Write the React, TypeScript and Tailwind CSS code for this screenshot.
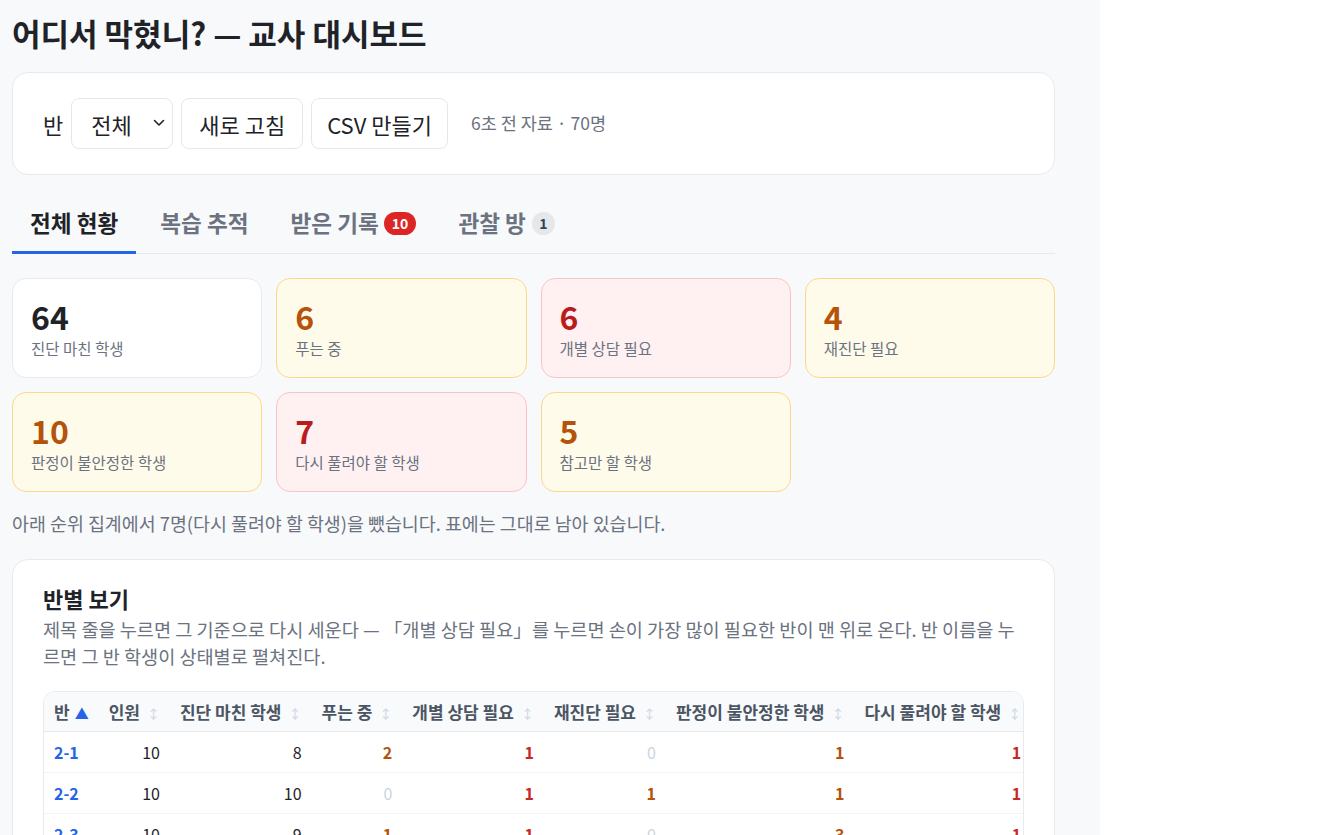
import React from "react";

const FONT = { fontFamily: '"Noto Sans CJK KR", "Noto Sans", sans-serif' };

type Tone = "plain" | "warn" | "danger";

const stats: { n: number; label: string; tone: Tone }[] = [
  { n: 64, label: "진단 마친 학생", tone: "plain" },
  { n: 6, label: "푸는 중", tone: "warn" },
  { n: 6, label: "개별 상담 필요", tone: "danger" },
  { n: 4, label: "재진단 필요", tone: "warn" },
  { n: 10, label: "판정이 불안정한 학생", tone: "warn" },
  { n: 7, label: "다시 풀려야 할 학생", tone: "danger" },
  { n: 5, label: "참고만 할 학생", tone: "warn" },
];

const cardTone: Record<Tone, string> = {
  plain: "bg-white border-[#e8eaee]",
  warn: "bg-[#fffbeb] border-[#fcd88a]",
  danger: "bg-[#fff1f2] border-[#fcc3c6]",
};
const numTone: Record<Tone, string> = {
  plain: "text-[#1f2328]",
  warn: "text-[#b45309]",
  danger: "text-[#b91c1c]",
};

type Row = {
  cls: string;
  total: number;
  done: number;
  solving: number;
  counsel: number;
  rediag: number;
  unstable: number;
  redo: number;
  ref: number;
};

const rows: Row[] = [
  { cls: "2-1", total: 10, done: 8, solving: 2, counsel: 1, rediag: 0, unstable: 1, redo: 1, ref: 1 },
  { cls: "2-2", total: 10, done: 10, solving: 0, counsel: 1, rediag: 1, unstable: 1, redo: 1, ref: 0 },
  { cls: "2-3", total: 10, done: 9, solving: 1, counsel: 1, rediag: 0, unstable: 3, redo: 1, ref: 1 },
  { cls: "2-4", total: 10, done: 9, solving: 1, counsel: 1, rediag: 1, unstable: 2, redo: 1, ref: 1 },
  { cls: "2-5", total: 10, done: 10, solving: 0, counsel: 0, rediag: 0, unstable: 1, redo: 1, ref: 0 },
  { cls: "2-6", total: 10, done: 9, solving: 1, counsel: 1, rediag: 1, unstable: 1, redo: 1, ref: 1 },
  { cls: "2-7", total: 10, done: 9, solving: 1, counsel: 1, rediag: 1, unstable: 1, redo: 1, ref: 1 },
];

function SortIcon() {
  return <span className="ml-[7px] text-[13px] font-normal text-[#cbd5e1]">↕</span>;
}

function Num({ v, kind }: { v: number; kind: "warn" | "danger" }) {
  if (v === 0) return <span className="text-[#cbd5e1]">0</span>;
  return (
    <span className={kind === "warn" ? "font-bold text-[#b45309]" : "font-bold text-[#c62828]"}>{v}</span>
  );
}

const heads: { label: string; key: keyof Row }[] = [
  { label: "인원", key: "total" },
  { label: "진단 마친 학생", key: "done" },
  { label: "푸는 중", key: "solving" },
  { label: "개별 상담 필요", key: "counsel" },
  { label: "재진단 필요", key: "rediag" },
  { label: "판정이 불안정한 학생", key: "unstable" },
  { label: "다시 풀려야 할 학생", key: "redo" },
  { label: "참고만 할 학생", key: "ref" },
];

const kindOf: Partial<Record<keyof Row, "warn" | "danger">> = {
  solving: "warn",
  counsel: "danger",
  rediag: "warn",
  unstable: "warn",
  redo: "danger",
  ref: "warn",
};

const tabBase = "-mb-px flex items-center border-b-[3px] px-[18px] pb-[14px] pt-[12px] text-[22.6px] leading-[28px]";

export default function App() {
  return (
    <div className="flex h-[835px] w-[1336px] bg-white" style={FONT}>
      <div className="h-[835px] w-[1100px] shrink-0 overflow-y-scroll bg-[#f8f9fb] [scrollbar-color:#8c8c8c_#fafafa] [&::-webkit-scrollbar]:w-[24px] [&::-webkit-scrollbar-track]:bg-[#fafafa] [&::-webkit-scrollbar-thumb]:rounded-full [&::-webkit-scrollbar-thumb]:border-[5px] [&::-webkit-scrollbar-thumb]:border-solid [&::-webkit-scrollbar-thumb]:border-transparent [&::-webkit-scrollbar-thumb]:bg-[#8c8c8c] [&::-webkit-scrollbar-thumb]:bg-clip-padding">
        <div className="ml-3 w-[1043px] pb-10 pt-[14px]">
          <h1 className="text-[31px] font-bold leading-[38px] text-[#1f2328]">어디서 막혔니? — 교사 대시보드</h1>

          <div className="mt-[20px] flex items-center gap-2 rounded-[16px] border border-[#e8eaee] bg-white px-[30px] py-[25px]">
            <span className="text-[22px] leading-[28px] text-[#1f2328]">반</span>
            <div className="relative">
              <select
                className="h-[51px] appearance-none rounded-[8px] border border-[#e5e7eb] bg-white pl-[19px] pr-[40px] text-[22px] leading-[28px] text-[#1f2328] outline-none"
                style={FONT}
                defaultValue="all"
              >
                <option value="all">전체</option>
              </select>
              <svg
                className="pointer-events-none absolute right-[7px] top-[18px]"
                width="14"
                height="14"
                viewBox="0 0 14 14"
                fill="none"
              >
                <path d="M2.5 4.5 7 9l4.5-4.5" stroke="#1f2328" strokeWidth="1.6" strokeLinecap="round" strokeLinejoin="round" />
              </svg>
            </div>
            <button className="h-[51px] rounded-[8px] border border-[#e5e7eb] bg-white px-[17px] text-[22px] leading-[28px] text-[#1f2328]">
              새로 고침
            </button>
            <button className="h-[51px] rounded-[8px] border border-[#e5e7eb] bg-white px-[15px] text-[22px] leading-[28px] text-[#1f2328]">
              CSV 만들기
            </button>
            <span className="ml-[15px] text-[17.5px] text-[#6b7280]">6초 전 자료 · 70명</span>
          </div>

          <div className="mt-[22px] flex gap-[6px] border-b border-[#e8eaee]">
            <div className={`${tabBase} border-[#2563eb] font-bold text-[#1f2328]`}>전체 현황</div>
            <div className={`${tabBase} border-transparent font-semibold text-[#6b7280]`}>복습 추적</div>
            <div className={`${tabBase} border-transparent font-semibold text-[#6b7280]`}>
              받은 기록
              <span className="ml-[5px] flex h-[23px] items-center rounded-full bg-[#dc2626] px-[8px] text-[14px] font-bold leading-none text-white">
                10
              </span>
            </div>
            <div className={`${tabBase} border-transparent font-semibold text-[#6b7280]`}>
              관찰 방
              <span className="ml-[6px] flex h-[23px] w-[23px] items-center justify-center rounded-full bg-[#e5e7eb] text-[14px] font-semibold leading-none text-[#374151]">
                1
              </span>
            </div>
          </div>

          <div className="mt-[24px] grid grid-cols-4 gap-[14px]">
            {stats.map((s) => (
              <div key={s.label} className={`rounded-[14px] border px-[18px] pb-[18px] pt-[16px] ${cardTone[s.tone]}`}>
                <div className={`text-[32px] font-bold leading-[42px] ${numTone[s.tone]}`}>{s.n}</div>
                <div className="text-[15.5px] leading-[22px] text-[#6b7280]">{s.label}</div>
              </div>
            ))}
          </div>

          <p className="mt-[18px] text-[18.4px] leading-[26px] text-[#6b7280]">
            아래 순위 집계에서 7명(다시 풀려야 할 학생)을 뺐습니다. 표에는 그대로 남아 있습니다.
          </p>

          <div className="mt-[23px] rounded-[16px] border border-[#e8eaee] bg-white px-[30px] pb-[30px] pt-[23px]">
            <h2 className="text-[22px] font-bold leading-[30px] text-[#1f2328]">반별 보기</h2>
            <p className="mt-[2px] text-[18.6px] leading-[27px] text-[#6b7280]">
              제목 줄을 누르면 그 기준으로 다시 세운다 — 「개별 상담 필요」를 누르면 손이 가장 많이 필요한 반이 맨 위로 온다. 반 이름을 누르면 그 반 학생이 상태별로 펼쳐진다.
            </p>

            <div className="mt-[22px] overflow-x-auto rounded-[12px] border border-[#e8eaee]">
              <table className="min-w-full border-collapse whitespace-nowrap text-[16px]">
                <thead>
                  <tr className="bg-[#f8fafc]">
                    <th className="h-[39px] border-b border-[#e8eaee] px-[10px] text-left text-[17px] font-semibold text-[#4b5563]">
                      반<span className="ml-[5px] text-[14px] text-[#2563eb]">▲</span>
                    </th>
                    {heads.map((h) => (
                      <th
                        key={h.label}
                        className="h-[39px] border-b border-[#e8eaee] px-[10px] text-right text-[17px] font-semibold text-[#4b5563]"
                      >
                        {h.label}
                        <SortIcon />
                      </th>
                    ))}
                  </tr>
                </thead>
                <tbody>
                  {rows.map((r) => (
                    <tr key={r.cls} className="border-b border-[#f1f3f6]">
                      <td className="h-[41px] px-[10px] text-left font-bold text-[#2563eb]">{r.cls}</td>
                      {heads.map((h) => {
                        const k = kindOf[h.key];
                        const v = r[h.key] as number;
                        return (
                          <td key={h.label} className="h-[41px] px-[10px] text-right text-[#1f2328]">
                            {k ? <Num v={v} kind={k} /> : v}
                          </td>
                        );
                      })}
                    </tr>
                  ))}
                </tbody>
              </table>
            </div>
          </div>
        </div>
      </div>
      <div className="flex-1 bg-white" />
    </div>
  );
}
